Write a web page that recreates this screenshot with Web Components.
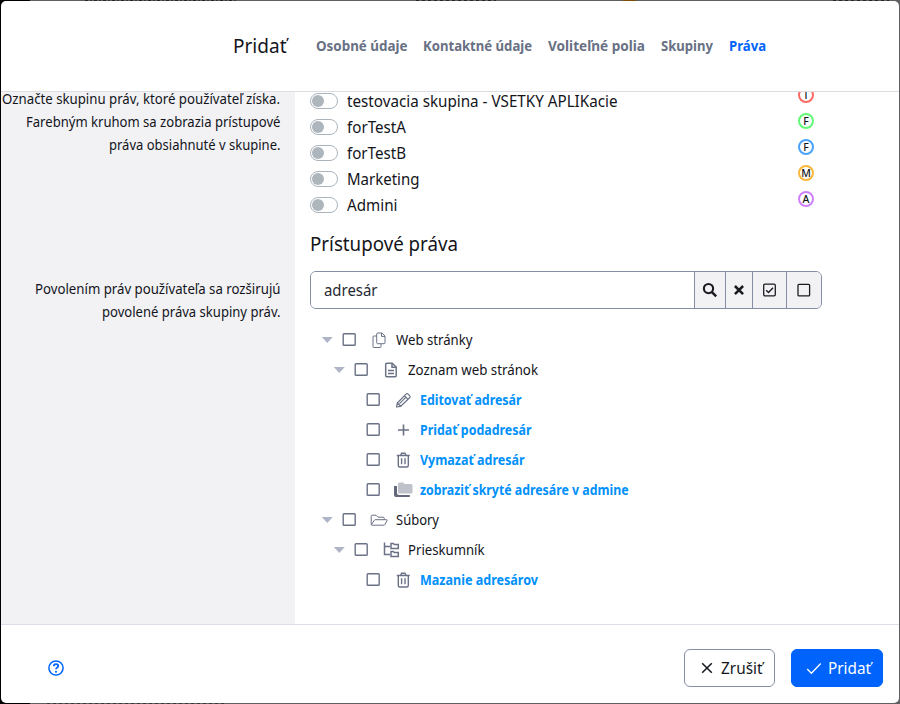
<!DOCTYPE html>
<html lang="sk">
<head>
<meta charset="utf-8">
<title>Pridať</title>
<style>
html,body{margin:0;height:100%;overflow:hidden}
body{font-family:"Noto Sans","Open Sans",sans-serif;color:#13151b;--line:#868ea5;--icon:#6b7286;--blue:#0063fb;
background:
repeating-linear-gradient(90deg,#252427 0 3px,#5f5e60 3px 5px,#38373a 5px 7px,#5f5e60 7px 9px) 85px 0/152px 1px no-repeat,
repeating-linear-gradient(90deg,#252427 0 3px,#5f5e60 3px 6px) 416px 0/80px 1px no-repeat,
linear-gradient(#7a4f05,#7a4f05) 623px 0/13px 1px no-repeat,
repeating-linear-gradient(90deg,#252427 0 3px,#5f5e60 3px 6px) 833px 0/56px 1px no-repeat,
repeating-linear-gradient(90deg,#38373a 0 3px,#5f5e60 3px 6px) 47px 703px/180px 1px no-repeat,
linear-gradient(90deg,#000 30px,#5f5e60 30px)}
</style>
</head>
<body>
<user-editor></user-editor>
<script>
const shadow = (el, html) => { el.attachShadow({mode:'open'}).innerHTML = html; };

/* Single line of text, condensed so that it fills the width given in "w". */
customElements.define('fit-text', class extends HTMLElement {
  connectedCallback() {
    shadow(this, `<style>:host{display:block;white-space:nowrap;flex:none}span{display:inline-block;transform-origin:0 50%}</style><span><slot></slot></span>`);
    const w = +this.getAttribute('w'), s = this.shadowRoot.querySelector('span');
    this.style.width = w + 'px';
    s.style.transform = `scaleX(${w / s.getBoundingClientRect().width})`;
  }
});

const icons = {
  copy:'<g fill="none" stroke="currentColor" stroke-width="1"><path d="M6.700 1h4.200l3.100 3v6.700a1 1 0 0 1-1 1H6.700a1 1 0 0 1-1-1V2a1 1 0 0 1 1-1z"/><path d="M10.500 1.100v3.300H14M5.500 4H3a1 1 0 0 0-1 1v9.500a1 1 0 0 0 1 1h6a1 1 0 0 0 1-1v-2.500"/></g>',
  file:'<g fill="none" stroke="currentColor" stroke-width="1.500"><path d="M3.700 1.200h5.500l4 3.800v8.700a1 1 0 0 1-1 1H3.700a1 1 0 0 1-1-1V2.200a1 1 0 0 1 1-1z"/><path d="M9 1.200v4h4M5 8.600h6M5 11.400h6"/></g>',
  pencil:'<g fill="none" stroke="currentColor" stroke-width="1.200" stroke-linejoin="round"><path d="M1.500 15l.8-4L11 2.200a1.500 1.500 0 0 1 2.200 0L14.600 3.600a1.500 1.500 0 0 1 0 2.200L5.700 14.300zM9.500 3.800l3.600 3.600M2.300 11l3.400 3.300M4.500 11.700l6-6"/></g>',
  plus:'<path d="M8.500 2.500v11M3 8h11" fill="none" stroke="currentColor" stroke-width="1.600"/>',
  trash:'<g fill="none" stroke="currentColor" stroke-width="1.400"><path d="M1.800 3.500h13M5.600 3.300l1-2h3.400l1 2M3.300 3.500v10a1.500 1.500 0 0 0 1.500 1.500h7a1.500 1.500 0 0 0 1.500-1.500v-10M6.600 6.300v6M10 6.300v6"/></g>',
  folders:'<path d="M-1 4v9a2 2 0 0 0 2 2H14.800v-2H4a2 2 0 0 1-2-2V4z" fill="#63697b"/><path d="M3 2a1.500 1.500 0 0 1 1.500-1.500H8L9.700 2H16a1.500 1.500 0 0 1 1.500 1.500v6.500A1.500 1.500 0 0 1 16 11.500H4.500A1.500 1.500 0 0 1 3 10z" fill="#bfc2ca"/>',
  open:'<g fill="none" stroke="currentColor" stroke-width="1" stroke-linejoin="round"><path d="M.2 12.500V4.200a1 1 0 0 1 1-1H5l2 2h5.200a1 1 0 0 1 1 1v1.500M.3 12.800l3-4.500a1 1 0 0 1 .9-.6H15.500q1 0 .6.800l-2.300 4.200a1 1 0 0 1-.9.500H1q-.8 0-.7-.4z"/></g>',
  tree:'<g fill="none" stroke="currentColor" stroke-width="1.500"><path d="M1.500 .5v12H7M1.500 4.500h5.500M8 1.500h2.300l1 1h4v4h-7.300zM8 9.500h2.300l1 1h4v4h-7.300z"/></g>',
  search:'<circle cx="6.500" cy="6.600" r="4.600" fill="none" stroke="currentColor" stroke-width="2.100"/><path d="M9.900 10.200l4.300 4.200" stroke="currentColor" stroke-width="2.500"/>',
  clear:'<path d="M3.900 4l8.200 8.200M12.100 4l-8.200 8.200" stroke="currentColor" stroke-width="2.500"/>',
  checked:'<rect x="1.700" y="2.200" width="11.600" height="11.600" rx="1.200" fill="none" stroke="currentColor" stroke-width="1.300"/><path d="M4.200 8.200l2.300 2.200 4.500-4.600" fill="none" stroke="currentColor" stroke-width="1.400"/>',
  box:'<rect x="2" y="2.300" width="11.600" height="11.600" rx="1" fill="none" stroke="currentColor" stroke-width="1.300"/>',
  close:'<path d="M3.200 3.200l9.600 9.600M12.800 3.200l-9.600 9.600" stroke="currentColor" stroke-width="1.500"/>',
  tick:'<path d="M1.200 9l4.200 4.200L14.700 3.500" fill="none" stroke="currentColor" stroke-width="1.300"/>',
  help:'<circle cx="8" cy="8" r="7.100" fill="none" stroke="currentColor" stroke-width="1.500"/><path d="M5.800 6.200q0-2 2.200-2t2.200 1.800q0 1.200-1.200 1.700-1 .5-1 1.500" fill="none" stroke="currentColor" stroke-width="1.800"/><circle cx="8" cy="11.700" r="1.050" fill="currentColor"/>'
};
customElements.define('ui-icon', class extends HTMLElement {
  connectedCallback() {
    shadow(this, `<style>:host{display:block;width:16px;height:16px;flex:none}svg{display:block;overflow:visible}</style><svg width="16" height="16" viewBox="0 0 16 16">${icons[this.getAttribute('name')]}</svg>`);
  }
});

customElements.define('nav-tabs', class extends HTMLElement {
  connectedCallback() {
    shadow(this, `<style>:host{display:flex;gap:16px;margin-top:-2px;font-size:15px;font-weight:700;line-height:24px;color:#687084}::slotted([active]){color:var(--blue)}</style><slot></slot>`);
  }
});

customElements.define('group-row', class extends HTMLElement {
  connectedCallback() {
    shadow(this, `<style>
:host{display:flex;align-items:center;height:26px;width:504px;font-size:16px;line-height:18px}
i{box-sizing:border-box;width:28px;height:16px;border:1px solid #abb4bd;border-radius:8px;margin-right:8.5px;padding:1px;background:#fff}
i::before{content:"";display:block;width:12px;height:12px;border-radius:50%;background:#adb5bd}
b{box-sizing:border-box;width:16px;height:16px;margin:-12px 0 0 auto;border:2px solid ${this.getAttribute('color')};border-radius:50%;font-size:10.5px;line-height:12px;font-weight:500;display:flex;justify-content:center}
</style><i></i><slot></slot><b>${this.getAttribute('mark')}</b>`);
  }
});

customElements.define('search-bar', class extends HTMLElement {
  connectedCallback() {
    shadow(this, `<style>
:host{display:flex;box-sizing:border-box;width:512px;height:38px;border:1px solid var(--line);border-radius:6px;overflow:hidden;background:#f2f2f5}
div{flex:1;background:#fff;padding-left:12.5px;font-size:16px;line-height:37px;color:#272a33}
button{box-sizing:border-box;margin:0;padding:0;border:0;border-left:1px solid var(--line);background:#f2f2f5;display:flex;align-items:center;justify-content:center;color:#1b1c20}
</style><div><fit-text w="53.5">adresár</fit-text></div>
<button style="width:31px"><ui-icon name="search"></ui-icon></button><button style="width:27px"><ui-icon name="clear"></ui-icon></button><button style="width:34px"><ui-icon name="checked"></ui-icon></button><button style="width:35px"><ui-icon name="box"></ui-icon></button>`);
  }
});

customElements.define('tree-row', class extends HTMLElement {
  connectedCallback() {
    const level = +this.getAttribute('level'), leaf = level === 2;
    shadow(this, `<style>
:host{display:grid;grid-template-columns:24px 20px 37px auto;align-items:center;justify-content:start;justify-items:center;height:30px;line-height:30px;font-size:14px;padding-left:${5 + level * 12}px;${leaf ? 'color:#0090fa;font-weight:700' : ''}}
svg{display:block}ui-icon{color:var(--icon);margin:-1px 0 0 3px}
</style><svg width="12" height="6" viewBox="0 0 12 6">${leaf ? '' : '<path d="M.8 0h11L6.300 6z" fill="#afb5c6"/>'}</svg>
<svg width="14" height="14" viewBox="0 0 14 14" style="margin-top:-1px"><rect x="1.200" y=".7" width="12" height="11.600" rx=".8" fill="none" stroke="#6b7286" stroke-width="1.400"/></svg>
<ui-icon name="${this.getAttribute('icon')}"></ui-icon><slot></slot>`);
  }
});

customElements.define('action-button', class extends HTMLElement {
  connectedCallback() {
    const primary = this.hasAttribute('primary');
    shadow(this, `<style>
:host{display:flex;box-sizing:border-box;align-items:center;height:38px;width:${primary ? 92 : 91}px;padding-left:14px;gap:6px;border:1px solid ${primary ? 'var(--blue)' : 'var(--line)'};border-radius:6px;font-size:16px;line-height:36px;background:${primary ? 'var(--blue)' : '#fff'};color:${primary ? '#fff' : '#13151b'}}
</style><ui-icon name="${primary ? 'tick' : 'close'}"></ui-icon><slot></slot>`);
  }
});

customElements.define('user-editor', class extends HTMLElement {
  connectedCallback() {
    shadow(this, `<style>
:host{display:flex;flex-direction:column;box-sizing:border-box;height:702px;width:898px;margin:0;background:#fff;border-radius:5px;overflow:hidden;translate:1px 1px}
header{display:flex;align-items:center;height:90px;border-bottom:1px solid #dcdde2;padding-left:231.5px;flex:none}
header>fit-text{font-size:20px;line-height:28px;margin-right:29.5px}
main{display:flex;height:532px;overflow:hidden}
aside{width:279px;padding-right:15px;background:#f2f2f5;display:flex;flex-direction:column;align-items:flex-end;font-size:14px;line-height:23px}
aside fit-text:first-child{margin-top:-5px}.second{margin-top:121px}
section{padding-left:15px;margin-top:-4px}
h5{margin:12px 0 13px;font-size:20px;font-weight:400;line-height:28px}
search-bar{margin-bottom:16px}
footer{display:flex;align-items:center;gap:16px;border-top:1px solid #dcdde6;padding:8px 16px 0 47px;box-sizing:border-box;height:79px}
footer ui-icon{color:var(--blue);margin-right:auto}
</style>
<header><fit-text w="53.5">Pridať</fit-text><nav-tabs><fit-text w="91.500">Osobné údaje</fit-text><fit-text w="109">Kontaktné údaje</fit-text><fit-text w="97">Voliteľné polia</fit-text><fit-text w="52">Skupiny</fit-text><fit-text w="37" active>Práva</fit-text></nav-tabs></header>
<main><aside><fit-text w="278">Označte skupinu práv, ktoré používateľ získa.</fit-text><fit-text w="254.500">Farebným kruhom sa zobrazia prístupové</fit-text><fit-text w="171.500">práva obsiahnuté v skupine.</fit-text><fit-text class="second" w="245.5">Povolením práv používateľa sa rozširujú</fit-text><fit-text w="178.5">povolené práva skupiny práv.</fit-text></aside>
<section>
<group-row mark="T" color="#fb6a63"><fit-text w="270.5">testovacia skupina - VSETKY APLIKacie</fit-text></group-row>
<group-row mark="F" color="#63fb76"><fit-text w="59">forTestA</fit-text></group-row>
<group-row mark="F" color="#4aa2fc"><fit-text w="59">forTestB</fit-text></group-row>
<group-row mark="M" color="#fcb73b"><fit-text w="72.5">Marketing</fit-text></group-row>
<group-row mark="A" color="#cf80fc"><fit-text w="50.5">Admini</fit-text></group-row>
<h5><fit-text w="148">Prístupové práva</fit-text></h5>
<search-bar></search-bar>
<tree-row level="0" icon="copy"><fit-text w="76.5">Web stránky</fit-text></tree-row>
<tree-row level="1" icon="file"><fit-text w="130">Zoznam web stránok</fit-text></tree-row>
<tree-row level="2" icon="pencil"><fit-text w="101.500">Editovať adresár</fit-text></tree-row>
<tree-row level="2" icon="plus"><fit-text w="111.5">Pridať podadresár</fit-text></tree-row>
<tree-row level="2" icon="trash"><fit-text w="104.500">Vymazať adresár</fit-text></tree-row>
<tree-row level="2" icon="folders"><fit-text w="208.5">zobraziť skryté adresáre v admine</fit-text></tree-row>
<tree-row level="0" icon="open"><fit-text w="43">Súbory</fit-text></tree-row>
<tree-row level="1" icon="tree"><fit-text w="76.5">Prieskumník</fit-text></tree-row>
<tree-row level="2" icon="trash"><fit-text w="118">Mazanie adresárov</fit-text></tree-row>
</section></main>
<footer><ui-icon name="help"></ui-icon><action-button><fit-text w="41.5">Zrušiť</fit-text></action-button><action-button primary><fit-text w="43">Pridať</fit-text></action-button></footer>`);
  }
});
</script>
</body>
</html>
